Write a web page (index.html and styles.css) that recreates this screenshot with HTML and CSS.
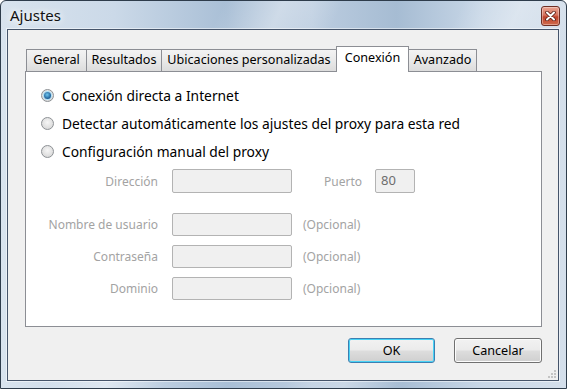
FILE: index.html
```html
<!DOCTYPE html>
<html lang="es">
<head>
  <meta charset="UTF-8" />
  <title>Ajustes</title>
  <link rel="stylesheet" href="styles.css">
</head>
<body>
  <!-- Dialog window -->
  <div class="window">
    <div class="titlebar">
      <span class="title">Ajustes</span>
      <span class="close">
        <svg width="11" height="10" viewBox="0 0 11 10">
          <path d="M2 1.5 L9 8.5 M9 1.5 L2 8.5" stroke="#5a1d14" stroke-width="3.6" stroke-linecap="round" />
          <path d="M2 1.5 L9 8.5 M9 1.5 L2 8.5" stroke="#ffffff" stroke-width="2" stroke-linecap="round" />
        </svg>
      </span>
    </div>

    <div class="client">
      <div class="tabs">
        <div class="tab tab-general">General</div>
        <div class="tab tab-results">Resultados</div>
        <div class="tab tab-places">Ubicaciones personalizadas</div>
        <div class="tab tab-conn active">Conexión</div>
        <div class="tab tab-adv">Avanzado</div>
      </div>

      <div class="panel">
        <div class="radio checked"><span class="dot"></span>Conexión directa a Internet</div>
        <div class="radio"><span class="dot"></span>Detectar automáticamente los ajustes del proxy para esta red</div>
        <div class="radio"><span class="dot"></span>Configuración manual del proxy</div>

        <div class="form">
          <div class="row row-addr">
            <span class="lbl">Dirección</span>
            <span class="field"></span>
            <span class="lbl-port">Puerto</span>
            <span class="field field-port">80</span>
          </div>
          <div class="row">
            <span class="lbl">Nombre de usuario</span>
            <span class="field"></span>
            <span class="hint">(Opcional)</span>
          </div>
          <div class="row">
            <span class="lbl">Contraseña</span>
            <span class="field"></span>
            <span class="hint">(Opcional)</span>
          </div>
          <div class="row">
            <span class="lbl">Dominio</span>
            <span class="field"></span>
            <span class="hint">(Opcional)</span>
          </div>
        </div>
      </div>

      <div class="buttons">
        <button class="btn btn-ok">OK</button>
        <button class="btn">Cancelar</button>
      </div>

      <svg class="grip" width="10" height="10" viewBox="0 0 10 10">
        <rect x="7" y="1" width="2" height="2" fill="#c4c4c4" />
        <rect x="4" y="4" width="2" height="2" fill="#c4c4c4" />
        <rect x="7" y="4" width="2" height="2" fill="#c4c4c4" />
        <rect x="1" y="7" width="2" height="2" fill="#c4c4c4" />
        <rect x="4" y="7" width="2" height="2" fill="#c4c4c4" />
        <rect x="7" y="7" width="2" height="2" fill="#c4c4c4" />
      </svg>
    </div>
  </div>
</body>
</html>
```

FILE: styles.css
```css
body {
  margin: 0;
  width: 567px;
  height: 389px;
  overflow: hidden;
  font-family: "Noto Sans", "Liberation Sans", sans-serif;
  font-size: 14px;
  background: #ffffff;
}

.window {
  width: 567px;
  height: 389px;
  box-sizing: border-box;
  border: 1px solid #2e3c4b;
  border-radius: 6px 6px 0 0;
  display: flex;
  flex-direction: column;
  padding-bottom: 7px;
  /* aero glass look */
  background:
    linear-gradient(115deg, rgba(255,255,255,0) 30%, rgba(255,255,255,0.35) 38%, rgba(255,255,255,0) 46%, rgba(255,255,255,0) 62%, rgba(255,255,255,0.3) 70%, rgba(255,255,255,0) 78%),
    linear-gradient(to right, #d8e3ee 0%, #cbd9e8 20%, #a9bfd6 40%, #bccde0 55%, #a6bcd3 70%, #c8d7e7 85%, #d4dfeb 100%);
}

.titlebar {
  height: 28px;
  flex-shrink: 0;
  display: flex;
  justify-content: space-between;
  align-items: flex-start;
  padding: 0 6px 0 9px;
}

.title {
  font-size: 15px;
  line-height: 28px;
  color: #111111;
  text-shadow: 0 0 6px #ffffff, 0 0 10px #ffffff;
}

.close {
  margin-top: 5px;
  width: 19px;
  height: 20px;
  box-sizing: border-box;
  border: 1px solid #6e2e24;
  border-radius: 3px;
  background: linear-gradient(#eaa491, #d7735e 45%, #c0432c 55%, #cf6a4c);
  display: flex;
  justify-content: center;
  align-items: center;
  box-shadow: inset 0 0 0 1px rgba(255,255,255,0.35);
}

.client {
  position: relative;
  flex: 1;
  margin: 0 7px 0 6px;
  border: 1px solid #45546a;
  background: #f0f0f0;
  padding: 16px 16px 0 17px;
  box-shadow: 0 0 0 1px rgba(255,255,255,0.5);
}

.tabs {
  display: flex;
  align-items: flex-end;
  height: 25px;
  padding-left: 1px;
  position: relative;
  z-index: 1;
}

.tab {
  box-sizing: border-box;
  height: 22px;
  border: 1px solid #8c8e94;
  border-bottom: none;
  margin-left: -1px;
  text-align: center;
  white-space: nowrap;
  font-size: 12.6px;
  line-height: 20px;
  color: #000000;
  background: linear-gradient(#f3f3f3, #e9e9e9 50%, #dcdcdc);
}

.tab-general { width: 61px; margin-left: 0; }
.tab-results { width: 76px; }
.tab-places  { width: 176px; }
.tab-conn    { width: 73px; }
.tab-adv     { width: 69px; }

.tab.active {
  height: 26px;
  background: #ffffff;
  margin-bottom: -1px;
  line-height: 22px;
  position: relative;
}

.panel {
  height: 256px;
  box-sizing: border-box;
  border: 1px solid #8c8e94;
  background: #ffffff;
  padding: 13px 0 0 15px;
}

.radio {
  display: flex;
  align-items: center;
  height: 20px;
  margin-bottom: 8px;
  color: #000000;
  font-size: 13.8px;
}

.dot {
  width: 13px;
  height: 13px;
  box-sizing: border-box;
  border-radius: 50%;
  border: 1px solid #8d9195;
  background: radial-gradient(circle at 50% 40%, #f6f6f6, #dcdcdc 70%, #cfcfcf);
  margin-right: 8px;
  display: flex;
  justify-content: center;
  align-items: center;
}

.radio.checked .dot::after {
  content: "";
  width: 7px;
  height: 7px;
  border-radius: 50%;
  background: radial-gradient(circle at 45% 40%, #6ec6ee, #1b5b95 70%);
  box-shadow: 0 0 0 1px #a8def6;
}

.form {
  margin-left: -15px;
}

.row {
  display: flex;
  align-items: center;
  height: 23px;
  margin-bottom: 9px;
  color: #a3a3a3;
  font-size: 12px;
}

.row.row-addr {
  height: 24px;
  margin-bottom: 20px;
}

.lbl {
  width: 132px;
  text-align: right;
  margin-right: 14px;
}

.field {
  width: 120px;
  height: 100%;
  box-sizing: border-box;
  border: 1px solid #b3b3b3;
  border-radius: 2px;
  background: #f0f0f0;
  color: #6d6d6d;
  padding-left: 5px;
  line-height: 21px;
  font-size: 13px;
}

.lbl-port {
  margin-left: 32px;
  margin-right: 13px;
}

.field.field-port {
  width: 40px;
}

.hint {
  margin-left: 11px;
}

.buttons {
  display: flex;
  justify-content: flex-end;
  gap: 19px;
  margin-top: 11px;
}

.btn {
  width: 88px;
  height: 25px;
  font-family: inherit;
  font-size: 12.6px;
  color: #000000;
  border: 1px solid #707070;
  border-radius: 3px;
  background: linear-gradient(#f2f2f2, #ebebeb 48%, #dddddd 52%, #cfcfcf);
  box-shadow: inset 0 0 0 1px #fcfcfc;
  padding: 0;
}

.btn-ok {
  width: 87px;
  border-color: #3c7fb1;
  box-shadow: inset 0 0 0 1px #48d3f6;
}

.grip {
  position: absolute;
  right: 1px;
  bottom: 1px;
}
```
